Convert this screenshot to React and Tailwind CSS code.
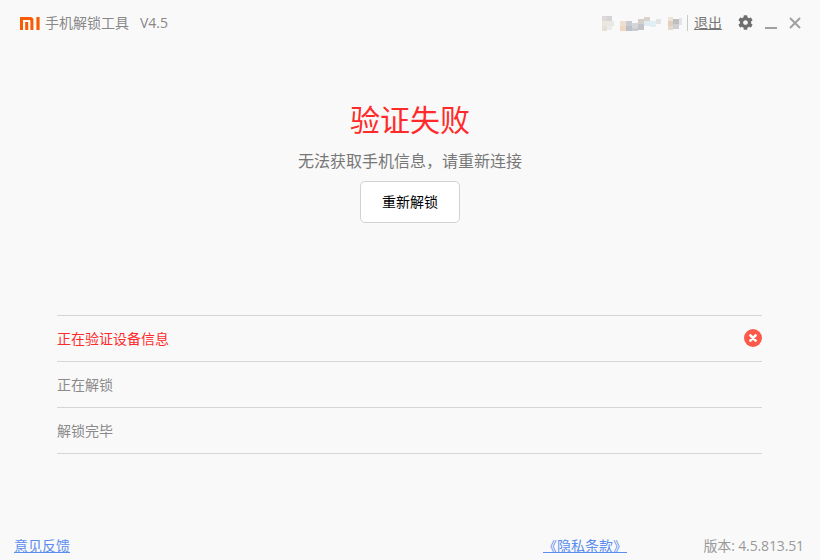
import { FaCog } from "react-icons/fa";

const font = "font-['Open_Sans','Noto_Sans_CJK_SC',sans-serif]";

// pixelated blur over the account name
const blurBlocks = [
  [0, 0, 5, 5, "#dcdad8"], [5, 0, 5, 5, "#d2d4d6"], [0, 5, 5, 5, "#ece6de"], [5, 5, 7, 5, "#e8e8e4"],
  [0, 10, 5, 5, "#e6e0d8"], [5, 10, 5, 4, "#ecebe7"], [18, 5, 6, 5, "#efdfd0"], [18, 10, 6, 5, "#efd8c2"],
  [24, 5, 6, 5, "#c8cace"], [24, 10, 6, 5, "#bcc0c8"], [30, 7, 6, 5, "#d6d6d6"], [30, 12, 6, 3, "#c8ccd0"],
  [36, 3, 6, 5, "#d3cfca"], [36, 8, 6, 6, "#c0c4ca"], [42, 1, 6, 4, "#dad3cc"], [42, 5, 6, 5, "#dfecf3"],
  [48, 5, 6, 6, "#e2eef5"], [54, 3, 5, 5, "#e4e4e4"], [66, 1, 5, 4, "#eee2d6"], [66, 5, 5, 5, "#e2cfbf"],
  [66, 10, 5, 4, "#e6d8ca"], [71, 3, 6, 5, "#bfbfc2"], [71, 8, 6, 5, "#cfcfd2"], [77, 2, 3, 7, "#e4e4e4"],
];

function MiLogo() {
  return (
    <svg width="20" height="13" viewBox="0 0 20 13" fill="#f95b05">
      <path d="M0 0h10.4C12.2 0 13.4 1.2 13.4 3v10h-3V4c0-.7-.4-1.1-1.1-1.1H3V13H0z" />
      <rect x="5.2" y="5" width="3" height="8" />
      <rect x="16.4" y="0" width="3.2" height="13" />
    </svg>
  );
}

function StepRow({ label, failed }) {
  return (
    <div className="flex h-[46px] items-center justify-between border-b border-[#d6d6d6]">
      <span className={`text-sm ${failed ? "text-[#ff2b2b]" : "text-[#8a8a8a]"}`}>{label}</span>
      {failed && (
        <svg className="-mt-[2px]" width="18" height="18" viewBox="0 0 18 18">
          <circle cx="9" cy="9" r="9" fill="#fb5a4b" />
          <path d="M6.4 6.4l5.2 5.2M11.6 6.4l-5.2 5.2" stroke="#fff" strokeWidth="2.6" strokeLinecap="round" />
        </svg>
      )}
    </div>
  );
}

export default function App() {
  return (
    <div className={`flex h-[560px] w-[820px] flex-col bg-[#f9f9f9] ${font}`}>
      {/* Title bar */}
      <div className="flex h-[46px] items-center justify-between pl-5 pr-[19px]">
        <div className="flex items-center">
          <MiLogo />
          <span className="ml-[5px] text-sm text-[#888888]">手机解锁工具</span>
          <span className="ml-[11px] text-sm text-[#888888]">V4.5</span>
        </div>
        <div className="flex items-center">
          <svg width="80" height="15" viewBox="0 0 80 15">
            {blurBlocks.map(([x, y, w, h, c], i) => (
              <rect key={i} x={x} y={y} width={w} height={h} fill={c} />
            ))}
          </svg>
          <span className="ml-[5px] h-4 w-px bg-[#c8c8c8]" />
          <a className="ml-[6px] text-sm text-[#777777] underline">退出</a>
          <FaCog className="ml-[16px] -mt-[1px] text-[#6f6f6f]" size={15} />
          <span className="ml-[12px] mt-[9px] h-[2px] w-[12px] bg-[#a0a0a0]" />
          <svg className="ml-[12px]" width="12" height="12" viewBox="0 0 12 12">
            <path d="M1 1l10 10M11 1L1 11" stroke="#a0a0a0" strokeWidth="2" />
          </svg>
        </div>
      </div>

      {/* Result */}
      <div className="mt-[52px] flex flex-col items-center">
        <h1 className="text-[30px] leading-[44px] font-normal text-[#ff2b2b]">验证失败</h1>
        <p className="mt-[7px] text-base leading-6 text-[#777777]">无法获取手机信息，请重新连接</p>
        <button className="mt-[8px] h-[42px] w-[100px] rounded-[5px] border border-[#d2d2d2] bg-white text-sm text-black">
          重新解锁
        </button>
      </div>

      {/* Steps */}
      <div className="mx-[57px] mt-[92px] w-[705px] border-t border-[#d6d6d6]">
        <StepRow label="正在验证设备信息" failed />
        <StepRow label="正在解锁" />
        <StepRow label="解锁完毕" />
      </div>

      {/* Footer */}
      <div className="mt-auto flex h-[28px] items-center pl-[14px] pr-4 text-sm">
        <a className="text-[#5b8def] underline">意见反馈</a>
        <a className="ml-[473px] text-[#5b8def] underline">《隐私条款》</a>
        <span className="ml-auto tracking-[-0.13px] text-[#999999]">版本: 4.5.813.51</span>
      </div>
    </div>
  );
}
